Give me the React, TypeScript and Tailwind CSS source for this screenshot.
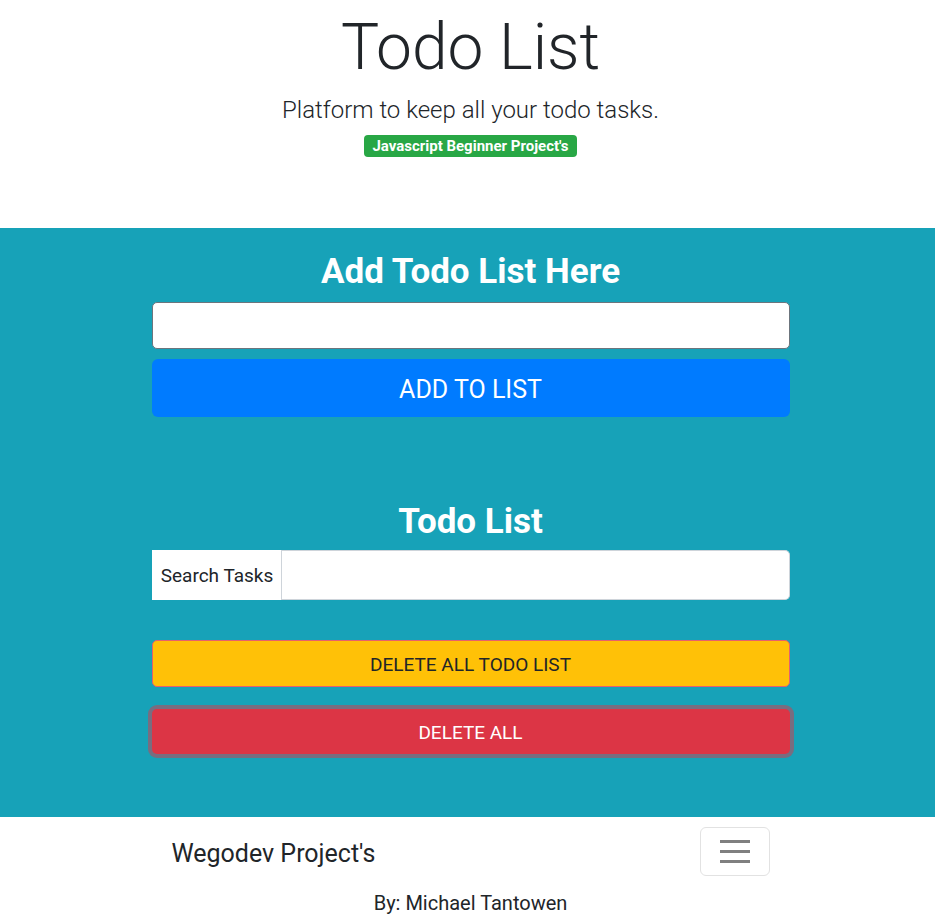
// Todo List page — Bootstrap-like layout rebuilt with Tailwind
export default function App() {
  return (
    <div className="min-h-screen bg-white font-['Roboto','Open_Sans',sans-serif] text-[#212529]">
      {/* ヘッダー：タイトルとバッジ */}
      <header className="flex h-[228px] flex-col items-center pl-[6px]">
        <h1 className="mt-[6px] text-[64px] font-light leading-[84px]">Todo List</h1>
        <p className="mt-[2px] text-[24px] font-light leading-[37px]">
          Platform to keep all your todo tasks.
        </p>
        <span className="mt-[6px] inline-block h-[22px] rounded-[4px] bg-[#28a745] px-[8px] text-[15px] font-bold leading-[22px] text-white">
          Javascript Beginner Project's
        </span>
      </header>

      {/* メイン：入力フォームと一覧 */}
      <main className="bg-[#17a2b8] pt-[20px] pb-[63px] pl-[6px]">
        <div className="mx-auto w-[638px]">
          <h2 className="text-center text-[35px] font-bold leading-[48px] text-white">
            Add Todo List Here
          </h2>
          <input
            type="text"
            className="mt-[6px] block h-[47px] w-full rounded-[5px] border border-[#6c757d] bg-white px-3 outline-none"
          />
          <button className="mt-[10px] block h-[58px] w-full rounded-[6px] bg-[#007bff] pt-[4px] text-[25px] text-white">
            ADD TO LIST
          </button>

          <h2 className="mt-[81px] text-center text-[35px] font-bold leading-[48px] text-white">
            Todo List
          </h2>
          <div className="mt-[4px] flex h-[50px] w-full">
            <span className="flex w-[130px] items-center justify-center border-r border-[#ced4da] bg-white pt-[2px] pl-[2px] text-[19px]">
              Search Tasks
            </span>
            <input
              type="text"
              className="h-full flex-1 rounded-r-[5px] border border-l-0 border-[#ced4da] bg-white px-3 outline-none"
            />
          </div>

          <button className="mt-[40px] block h-[47px] w-full rounded-[5px] border border-[#e4606d] bg-[#ffc107] pt-[3px] text-[19px] text-[#212529]">
            DELETE ALL TODO LIST
          </button>
          <button className="mt-[22px] block h-[45px] w-full rounded-[5px] bg-[#dc3545] pt-[3px] text-[19px] text-white shadow-[0_0_0_4px_#786d80]">
            DELETE ALL
          </button>
        </div>
      </main>

      {/* フッター：ナビバーと作者 */}
      <footer className="pl-[6px]">
        <nav className="mx-auto flex w-[638px] items-center justify-between px-[20px] py-[10px]">
          <span className="pt-[3px] text-[25px] leading-[37px]">Wegodev Project's</span>
          <button className="flex h-[49px] w-[70px] flex-col items-center justify-center gap-[7px] rounded-[6px] border border-[#e2e2e2]">
            <span className="block h-[3px] w-[30px] bg-[#808080]" />
            <span className="block h-[3px] w-[30px] bg-[#808080]" />
            <span className="block h-[3px] w-[30px] bg-[#808080]" />
          </button>
        </nav>
        <p className="mt-[2px] text-center text-[20px] leading-[30px]">By: Michael Tantowen</p>
      </footer>
    </div>
  );
}
